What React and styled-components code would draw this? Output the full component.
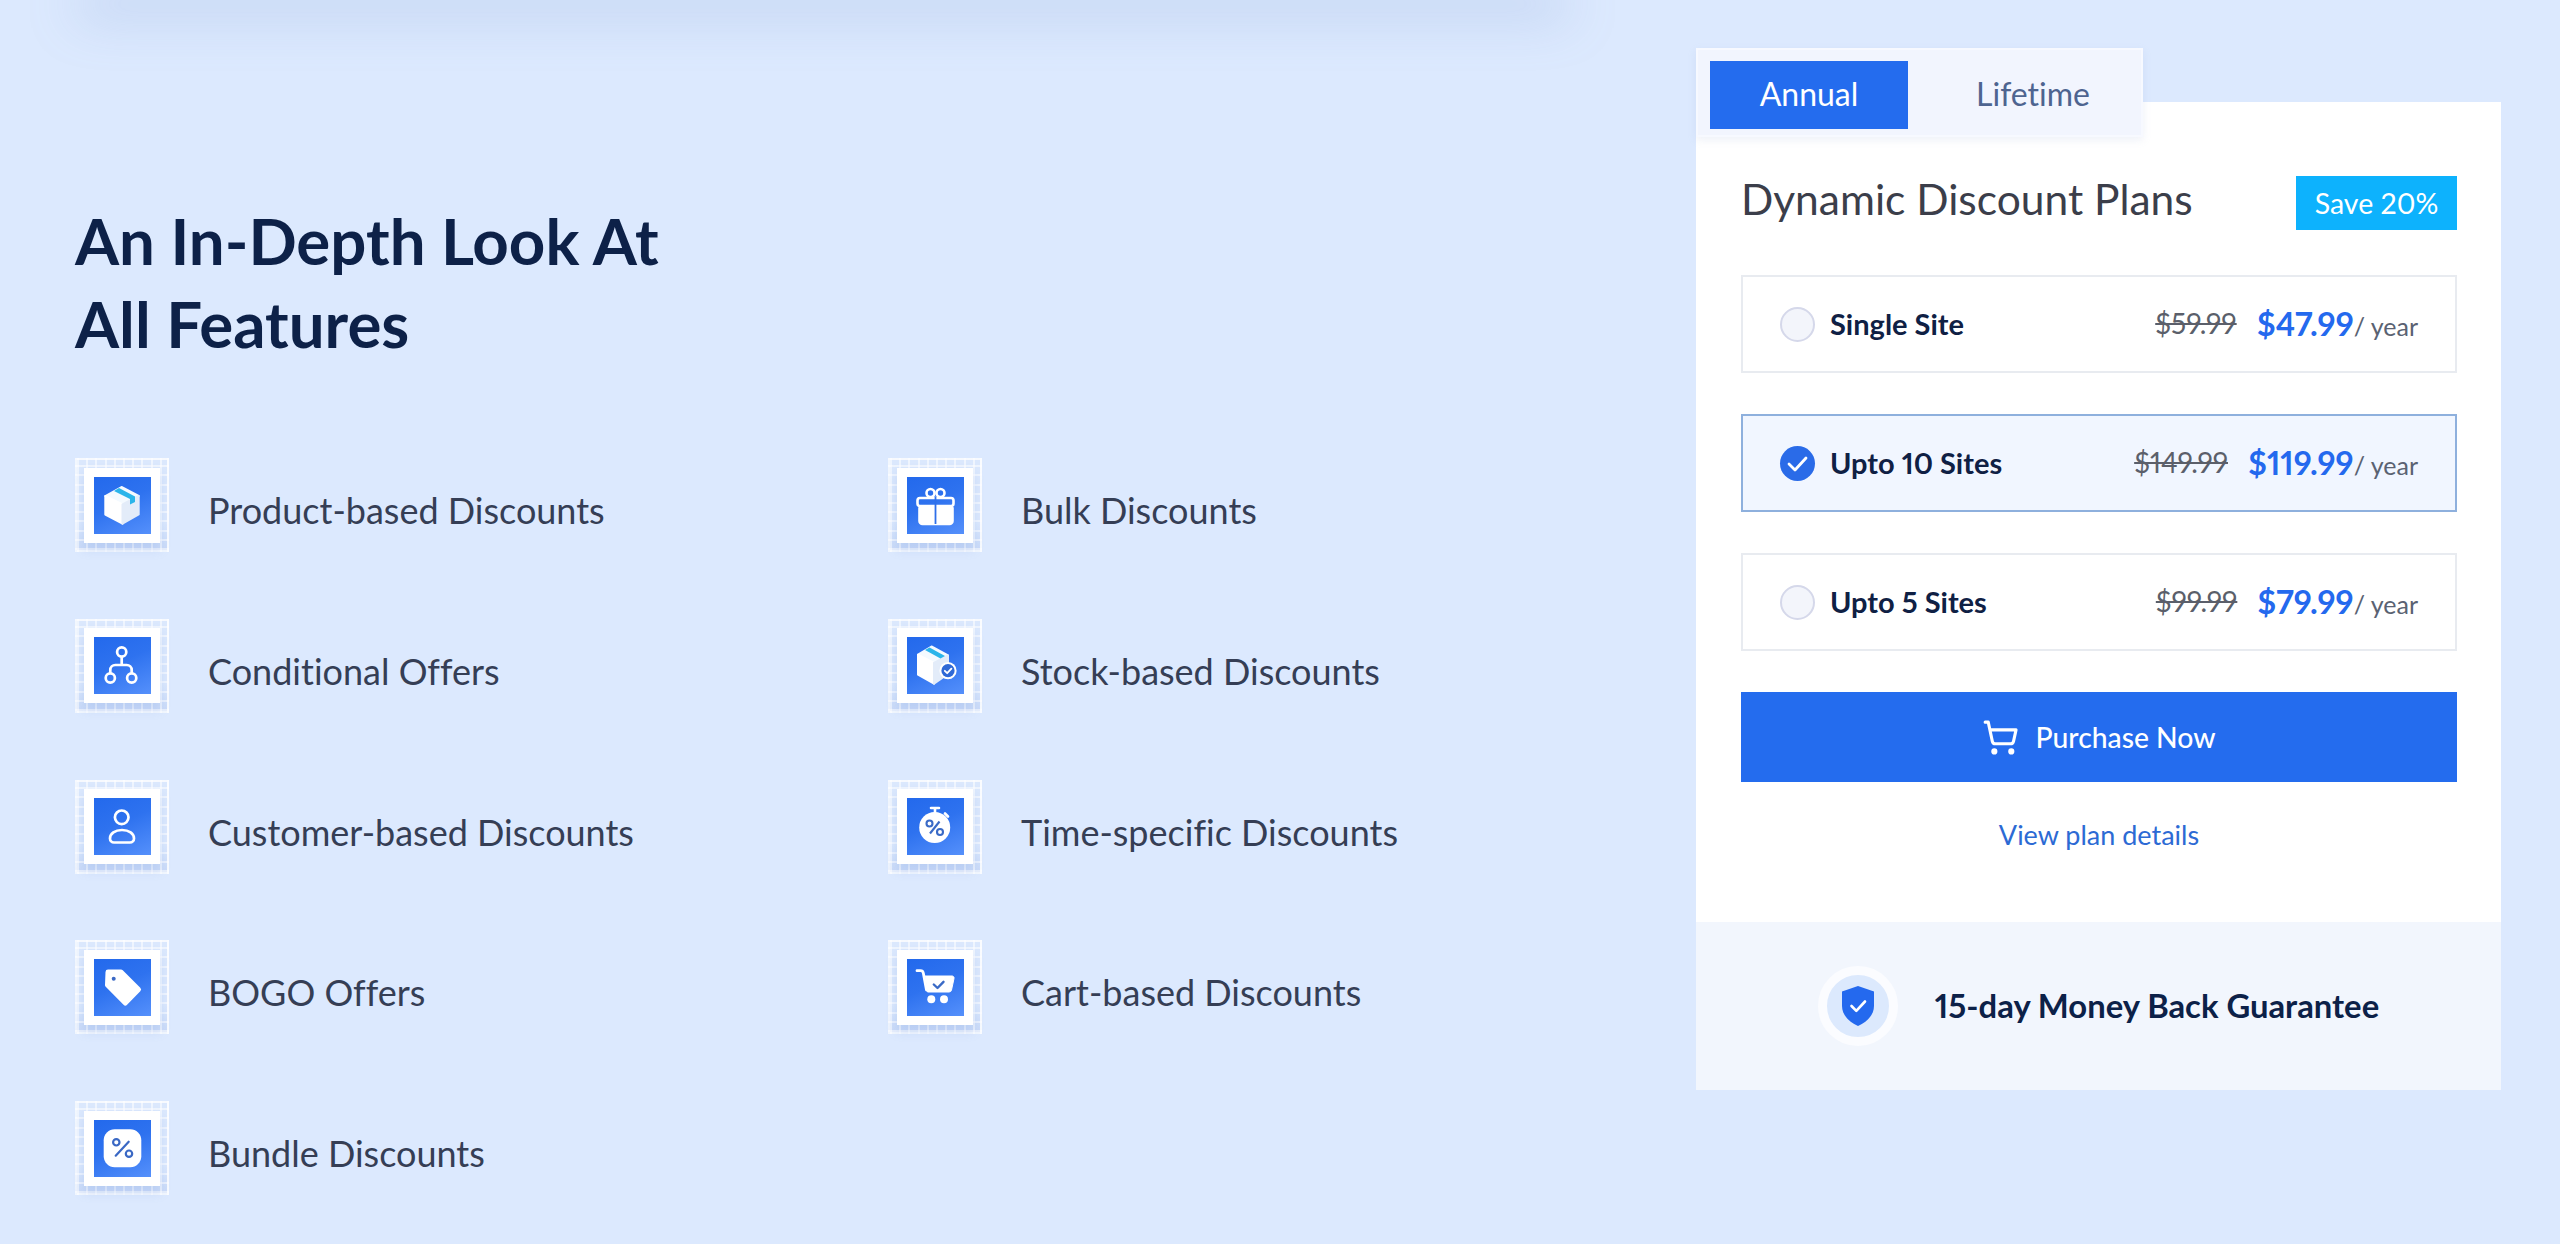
import styled, { createGlobalStyle } from "styled-components";
import { ShoppingCart } from "lucide-react";

const GlobalStyle = createGlobalStyle`
  html, body {
    margin: 0;
    padding: 0;
    background: #dce9fe;
    font-family: "Lato", "Liberation Sans", sans-serif;
    font-variant-numeric: proportional-nums;
    font-variant-ligatures: none;
  }
`;

const FEATURES = [
  { name: "Product-based Discounts", icon: "box" },
  { name: "Bulk Discounts", icon: "gift" },
  { name: "Conditional Offers", icon: "tree" },
  { name: "Stock-based Discounts", icon: "stock" },
  { name: "Customer-based Discounts", icon: "user" },
  { name: "Time-specific Discounts", icon: "watch" },
  { name: "BOGO Offers", icon: "tag" },
  { name: "Cart-based Discounts", icon: "cart" },
  { name: "Bundle Discounts", icon: "percent" }
];

const PLANS = [
  { name: "Single Site", old: "$59.99", price: "$47.99" },
  { name: "Upto 10 Sites", old: "$149.99", price: "$119.99", selected: true },
  { name: "Upto 5 Sites", old: "$99.99", price: "$79.99" }
];

function CubeShape({ tape }) {
  return (
    <>
      <path d="M27.5 10 44.7 19 28.5 27.5 11.3 19Z" fill="#f4faff" stroke="#f4faff" strokeWidth="2" strokeLinejoin="round" />
      <path d="M11.3 19 28.5 27.5V46.7L11.3 37.5Z" fill="#ffffff" stroke="#ffffff" strokeWidth="2" strokeLinejoin="round" />
      <path d="M28.5 27.5 44.7 19V37.5L28.5 46.7Z" fill="#e3ecf9" stroke="#e3ecf9" strokeWidth="2" strokeLinejoin="round" />
      <path d={tape} fill="#2bb5ea" />
    </>
  );
}

function FeatureGlyph({ icon }) {
  switch (icon) {
    case "box":
      return <CubeShape tape="M20 14 25 11 41 19.5V25L36 27.5V22Z" />;
    case "gift":
      return (
        <g fill="none" stroke="#fff" strokeWidth="2.6" strokeLinejoin="round">
          <circle cx="23.5" cy="16" r="4" />
          <circle cx="33.5" cy="16" r="4" />
          <rect x="10.5" y="21" width="36" height="8" rx="2.5" />
          <path d="M12.5 31H45.5V44A3 3 0 0 1 42.5 47H15.5A3 3 0 0 1 12.5 44Z" fill="#fff" />
          <path d="M28.5 20V47" stroke="#2f6fe9" strokeWidth="1.8" />
        </g>
      );
    case "tree":
      return (
        <g fill="none" stroke="#fff" strokeWidth="2.7">
          <circle cx="27.7" cy="15" r="4.6" />
          <circle cx="16.3" cy="41" r="4.6" />
          <circle cx="37.7" cy="41" r="4.6" />
          <path d="M27.7 20V28M16.3 36V33A5 5 0 0 1 21.3 28H32.7A5 5 0 0 1 37.7 33V36" />
        </g>
      );
    case "stock":
      return (
        <>
          <path d="M24.5 9.5 41 18.5 27 26 11 17.7Z" fill="#f4faff" stroke="#f4faff" strokeWidth="2" strokeLinejoin="round" />
          <path d="M11 17.7 27 26V46.7L11 37.7Z" fill="#fff" stroke="#fff" strokeWidth="2" strokeLinejoin="round" />
          <path d="M27 26 41 18.5V37L27 46.7Z" fill="#e3ecf9" stroke="#e3ecf9" strokeWidth="2" strokeLinejoin="round" />
          <path d="M18 13 22.5 10.6 38 19 33.5 21.5Z" fill="#2bb5ea" />
          <circle cx="41" cy="33.7" r="8.6" fill="#fff" />
          <circle cx="41" cy="33.7" r="6.6" fill="#2f69d6" />
          <path d="M37.8 33.8 40.2 36.2 44.4 31.6" fill="none" stroke="#fff" strokeWidth="1.8" strokeLinecap="round" strokeLinejoin="round" />
        </>
      );
    case "user":
      return (
        <g fill="none" stroke="#fff" strokeWidth="2.7">
          <circle cx="27.7" cy="19.3" r="6.8" />
          <path d="M20 44.5A4 4 0 0 1 16 40.5C16 35.5 21 32 28 32S40 35.5 40 40.5A4 4 0 0 1 36 44.5Z" />
        </g>
      );
    case "watch":
      return (
        <>
          <path d="M24 10H32M28 10V15M38 15.5 41 18.5" stroke="#fff" strokeWidth="2.6" strokeLinecap="round" fill="none" />
          <circle cx="27.7" cy="29.5" r="15.5" fill="#fff" />
          <g fill="none" stroke="#3a6ac6" strokeWidth="2.1">
            <circle cx="22.5" cy="25.5" r="3" />
            <circle cx="33" cy="34" r="3" />
            <path d="M32.5 23.5 23 35.5" />
          </g>
        </>
      );
    case "tag":
      return (
        <>
          <path d="M14 13H27L44.5 30.5 31.3 44 13.5 26Z" fill="#fff" stroke="#fff" strokeWidth="5" strokeLinejoin="round" />
          <circle cx="19.7" cy="19.7" r="2" fill="#3a68c4" />
        </>
      );
    case "cart":
      return (
        <>
          <path d="M10 11.7H13.5C15 11.7 16 12.5 16.3 14L19.5 31" fill="none" stroke="#fff" strokeWidth="2.8" strokeLinecap="round" />
          <path d="M18 17H45A2 2 0 0 1 47 19.5L44.5 31A2.5 2.5 0 0 1 42 33H20.5Z" fill="#fff" stroke="#fff" strokeLinejoin="round" />
          <circle cx="24.3" cy="40.3" r="4" fill="#fff" />
          <circle cx="37" cy="40.3" r="4" fill="#fff" />
          <path d="M26.8 25.5 30.5 29 36.5 22.8" fill="none" stroke="#3a6ac6" strokeWidth="2.4" strokeLinecap="round" strokeLinejoin="round" />
        </>
      );
    case "percent":
      return (
        <>
          <rect x="9.7" y="9.3" width="37.6" height="38" rx="11" fill="#fff" />
          <g fill="none" stroke="#3a68c4" strokeWidth="2.2">
            <circle cx="22.3" cy="22.3" r="3.2" />
            <circle cx="35" cy="33.7" r="3.2" />
            <path d="M34.7 21.7 21.7 35.7" strokeLinecap="round" />
          </g>
        </>
      );
    default:
      return null;
  }
}

export default function App() {
  return (
    <Page>
      <GlobalStyle />
      <TopCardShadow />
      <Columns>
        <Features>
          <Heading>
            An In-Depth Look At
            <br />
            All Features
          </Heading>
          <FeatureGrid>
            {FEATURES.map((feature) => (
              <Feature key={feature.name}>
                <IconFrame>
                  <IconPlate>
                    <IconTile>
                      <svg width="57" height="57" viewBox="0 0 57 57">
                        <FeatureGlyph icon={feature.icon} />
                      </svg>
                    </IconTile>
                  </IconPlate>
                </IconFrame>
                <FeatureName>{feature.name}</FeatureName>
              </Feature>
            ))}
          </FeatureGrid>
        </Features>

        <Pricing>
          <Tabs>
            <Tab $active>Annual</Tab>
            <Tab>Lifetime</Tab>
          </Tabs>
          <Panel>
            <PanelBody>
              <PanelHeader>
                <PanelTitle>Dynamic Discount Plans</PanelTitle>
                <SaveBadge>Save 20%</SaveBadge>
              </PanelHeader>
              <PlanList>
                {PLANS.map((plan) => (
                  <Plan key={plan.name} $selected={plan.selected}>
                    <Radio $selected={plan.selected}>
                      {plan.selected && (
                        <svg width="35" height="35" viewBox="0 0 35 35">
                          <path d="M9 18 15 24 26 12" fill="none" stroke="#fff" strokeWidth="2.8" strokeLinecap="round" strokeLinejoin="round" />
                        </svg>
                      )}
                    </Radio>
                    <PlanName>{plan.name}</PlanName>
                    <OldPrice>{plan.old}</OldPrice>
                    <Price>{plan.price}</Price>
                    <Period>/ year</Period>
                  </Plan>
                ))}
              </PlanList>
              <PurchaseButton>
                <ShoppingCart size={37} strokeWidth={2} />
                Purchase Now
              </PurchaseButton>
              <DetailsLink>View plan details</DetailsLink>
            </PanelBody>
            <Guarantee>
              <ShieldBadge>
                <svg width="32" height="40" viewBox="0 0 32 40">
                  <path d="M16 0 32 5.5V20C32 29 25 36 16 40 7 36 0 29 0 20V5.5Z" fill="#2469ee" />
                  <path d="M9.5 20 14.3 24.8 23 15.5" fill="none" stroke="#fff" strokeWidth="2.6" strokeLinecap="round" strokeLinejoin="round" />
                </svg>
              </ShieldBadge>
              <GuaranteeText>15-day Money Back Guarantee</GuaranteeText>
            </Guarantee>
          </Panel>
        </Pricing>
      </Columns>
    </Page>
  );
}

const Page = styled.div`
  width: 2560px;
  height: 1244px;
  overflow: hidden;
  background: #dce9fe;
`;

// The card of the section above: only its shadow reaches this part of the page
const TopCardShadow = styled.div`
  height: 0;
  width: 1465px;
  margin-left: 90px;
  box-shadow: 0 4px 50px 12px rgba(130, 160, 210, 0.36);
`;

const Columns = styled.div`
  display: flex;
  justify-content: space-between;
  padding: 0 59px 0 75px;
`;

const Features = styled.section`
  width: 1560px;
  padding-top: 199px;
`;

const Heading = styled.h1`
  margin: 0;
  font-size: 63.6px;
  line-height: 83px;
  font-weight: 700;
  color: #0d2148;
`;

const FeatureGrid = styled.div`
  display: grid;
  grid-template-columns: 813px 1fr;
  grid-auto-rows: 94px;
  row-gap: 66.75px;
  margin-top: 93px;
`;

const Feature = styled.div`
  display: flex;
  align-items: center;
  gap: 39px;
`;

const IconFrame = styled.div`
  flex: none;
  display: flex;
  align-items: center;
  justify-content: center;
  box-sizing: border-box;
  width: 94px;
  height: 94px;
  border: 2px solid rgba(255, 255, 255, 0.65);
  background:
    repeating-linear-gradient(90deg, rgba(255, 255, 255, 0.55) 0 2px, transparent 2px 9.2px),
    repeating-linear-gradient(0deg, rgba(255, 255, 255, 0.55) 0 2px, transparent 2px 9.2px),
    linear-gradient(180deg, #dbe8fd 0%, #dbe8fd 70%, #c9daf8 100%);
`;

const IconPlate = styled.div`
  display: flex;
  align-items: center;
  justify-content: center;
  width: 76px;
  height: 75px;
  background: #ffffff;
  box-shadow: 0 6px 10px rgba(120, 155, 225, 0.25);
`;

const IconTile = styled.div`
  display: flex;
  width: 57px;
  height: 57px;
  background: linear-gradient(155deg, #2369ec 0%, #2e72ef 45%, #5590fb 100%);
`;

const FeatureName = styled.div`
  margin-top: 10px;
  font-size: 36px;
  font-weight: 400;
  color: #353e55;
`;

const Pricing = styled.aside`
  flex: none;
  width: 805px;
  padding-top: 48px;
`;

const Tabs = styled.div`
  position: relative;
  z-index: 1;
  display: flex;
  box-sizing: border-box;
  width: 447px;
  height: 89px;
  margin-bottom: -35px;
  padding: 11px 12px 6px;
  background: #f2f5fe;
  border: 2px solid #f7f9ff;
  box-shadow: 0 3px 8px rgba(150, 170, 210, 0.16);
`;

const Tab = styled.div`
  display: flex;
  align-items: center;
  justify-content: center;
  box-sizing: border-box;
  width: ${(props) => (props.$active ? "198px" : "208px")};
  padding-left: ${(props) => (props.$active ? "0" : "42px")};
  padding-bottom: 4px;
  font-size: 32px;
  background: ${(props) => (props.$active ? "#246cee" : "transparent")};
  color: ${(props) => (props.$active ? "#ffffff" : "#4e6490")};
`;

const Panel = styled.div`
  background: #ffffff;
`;

const PanelBody = styled.div`
  display: flex;
  flex-direction: column;
  height: 820px;
  box-sizing: border-box;
  padding: 74px 44px 0 45px;
`;

const PanelHeader = styled.div`
  display: flex;
  align-items: flex-start;
  justify-content: space-between;
`;

const PanelTitle = styled.h2`
  margin: 0;
  font-size: 42.5px;
  line-height: 46px;
  font-weight: 400;
  color: #3b3e4a;
`;

const SaveBadge = styled.div`
  display: flex;
  align-items: center;
  justify-content: center;
  width: 161px;
  height: 54px;
  font-size: 28.5px;
  background: #0db2fd;
  color: #ffffff;
`;

const PlanList = styled.div`
  display: flex;
  flex-direction: column;
  gap: 41px;
  margin-top: 45px;
`;

const Plan = styled.div`
  display: flex;
  align-items: center;
  box-sizing: border-box;
  height: 98px;
  padding: 0 37px 0 37px;
  border: 2px solid ${(props) => (props.$selected ? "#8eb0dd" : "#e8ebf0")};
  background: ${(props) => (props.$selected ? "#f1f6ff" : "#ffffff")};
`;

const Radio = styled.div`
  display: flex;
  align-items: center;
  justify-content: center;
  flex: none;
  box-sizing: border-box;
  width: 35px;
  height: 35px;
  margin-right: 15px;
  border-radius: 50%;
  border: ${(props) => (props.$selected ? "none" : "2px solid #d5d8ea")};
  background: ${(props) => (props.$selected ? "#2a6be8" : "#f3f5fb")};
`;

const PlanName = styled.div`
  flex: 1;
  margin-top: -2px;
  font-size: 29px;
  font-weight: 700;
  color: #0f2044;
`;

const OldPrice = styled.div`
  margin-right: 20px;
  margin-top: -2px;
  font-size: 28px;
  color: #5b5f6a;
  text-decoration: line-through;
`;

const Price = styled.div`
  margin-top: -2px;
  font-size: 32.5px;
  font-weight: 700;
  color: #2469ee;
`;

const Period = styled.div`
  margin-top: 3px;
  font-size: 25px;
  color: #5a6272;
`;

const PurchaseButton = styled.button`
  display: flex;
  align-items: center;
  justify-content: center;
  gap: 16px;
  width: 100%;
  height: 90px;
  margin-top: 41px;
  border: none;
  font-family: inherit;
  font-size: 28.3px;
  font-weight: 500;
  background: #246cee;
  color: #ffffff;
`;

const DetailsLink = styled.a`
  margin-top: 35px;
  text-align: center;
  font-size: 27px;
  line-height: 36px;
  color: #2c6ad4;
`;

const Guarantee = styled.div`
  display: flex;
  align-items: center;
  justify-content: center;
  gap: 37px;
  height: 168px;
  padding-right: 0;
  background: #f2f6fd;
`;

const ShieldBadge = styled.div`
  display: flex;
  align-items: center;
  justify-content: center;
  box-sizing: border-box;
  width: 80px;
  height: 80px;
  border: 9px solid #fbfcff;
  border-radius: 50%;
  background: #dce9fd;
`;

const GuaranteeText = styled.div`
  margin-top: -2px;
  font-size: 32.8px;
  font-weight: 700;
  color: #0c2148;
`;
